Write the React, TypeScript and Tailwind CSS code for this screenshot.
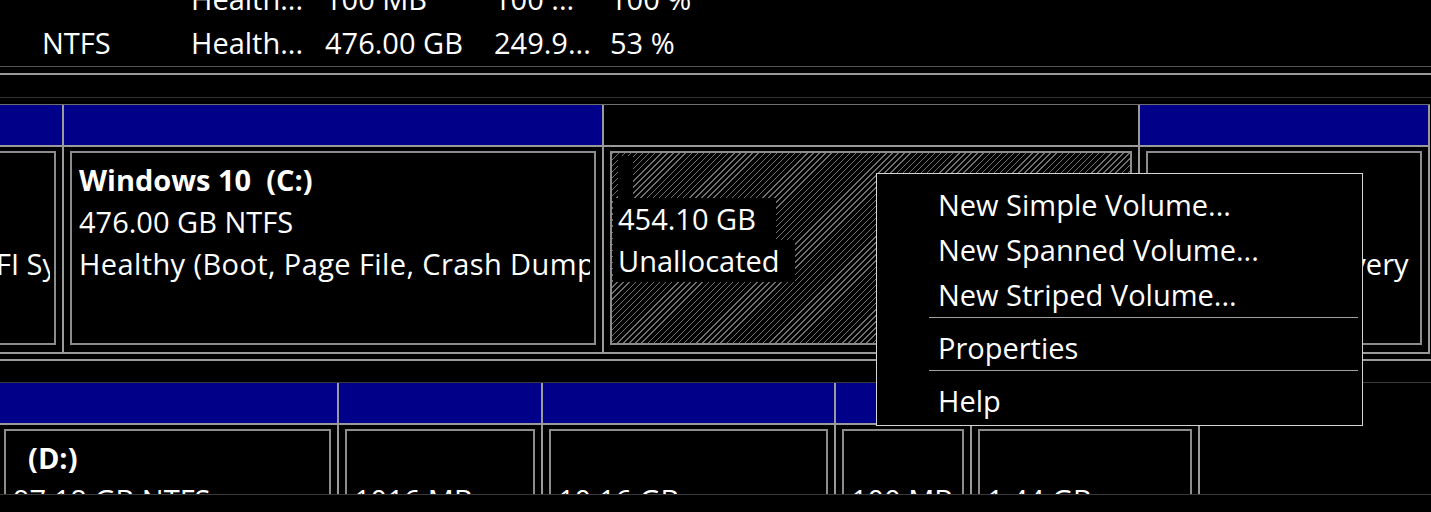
import type { ReactNode } from "react";

type Line = { text: string; bold?: boolean; className?: string };

const BAR_BLUE = "bg-[#000088]";

const listRows: string[][] = [
  ["", "Health...", "100 MB", "100 ...", "100 %"],
  ["NTFS", "Health...", "476.00 GB", "249.9...", "53 %"],
];

const colWidths = ["w-[191px] pl-[42px]", "w-[134px]", "w-[169px]", "w-[116px]", "flex-1"];

function VolumeList() {
  return (
    <div className="h-[66px] overflow-hidden">
      <div className="-mt-[23px]">
        {listRows.map((row, i) => (
          <div key={i} className="flex h-[44px] items-center whitespace-nowrap leading-[44px]">
            {row.map((cell, j) => (
              <div key={j} className={`${colWidths[j]} shrink-0`}>
                {cell}
              </div>
            ))}
          </div>
        ))}
      </div>
    </div>
  );
}

type PartitionProps = {
  width: string;
  bar: "blue" | "none";
  lines?: Line[];
  children?: ReactNode;
  hatched?: boolean;
  textClass?: string;
};

function Partition({
  width,
  bar,
  lines = [],
  children,
  hatched = false,
  textClass = "mr-[4px] pl-[7px]",
}: PartitionProps) {
  return (
    <div className={`${width} flex shrink-0 flex-col border-r-2 border-[#9a9a9a]`}>
      <div
        className={`h-[42px] border-b-2 border-[#9a9a9a] ${bar === "blue" ? BAR_BLUE : "bg-black"}`}
      />
      <div className="h-[205px] pb-[7px] pl-[6px] pr-[6px] pt-[4px]">
        <div
          className={`h-full overflow-hidden border-2 border-[#8c8c8c] ${
            hatched
              ? "bg-[repeating-linear-gradient(135deg,#707070_0px,#707070_1px,#000_1px,#000_4.3px)]"
              : "bg-black"
          }`}
        >
          {children ?? (
            <div className={`${textClass} overflow-hidden whitespace-pre pt-[6px] leading-[42px]`}>
              {lines.map((line, i) => (
                <div key={i} className={`${line.bold ? "font-bold" : ""} ${line.className ?? ""}`}>
                  {line.text || "\u00a0"}
                </div>
              ))}
            </div>
          )}
        </div>
      </div>
    </div>
  );
}

function Unallocated() {
  return (
    <div className="pt-[3px] leading-[42px] whitespace-nowrap">
      <div className="ml-[6px] h-[42px] w-[15px] bg-black" />
      <div className="ml-[1px] w-fit bg-black pl-[5px] pr-[20px]">454.10 GB</div>
      <div className="ml-[1px] w-fit bg-black pl-[5px] pr-[15px]">Unallocated</div>
    </div>
  );
}

function ContextMenu() {
  const items = ["New Simple Volume...", "New Spanned Volume...", "New Striped Volume..."];
  return (
    <div className="absolute left-[876px] top-[173px] h-[253px] w-[487px] border border-[#d4d4d4] bg-black pt-[8px] leading-[45px] whitespace-nowrap">
      {items.map((item) => (
        <div key={item} className="h-[45px] pl-[61px]">
          {item}
        </div>
      ))}
      <div className="ml-[52px] mr-[4px] h-px bg-[#a0a0a0]" />
      <div className="mt-[8px] h-[44px] pl-[61px] leading-[44px]">Properties</div>
      <div className="ml-[52px] mr-[4px] h-px bg-[#a0a0a0]" />
      <div className="mt-[7px] h-[45px] pl-[61px]">Help</div>
    </div>
  );
}

export default function App() {
  return (
    <div className="relative h-[512px] w-[1431px] overflow-hidden bg-black font-['Open_Sans',sans-serif] text-[29px] text-white">
      <VolumeList />
      <div className="h-px bg-[#555555]" />
      <div className="mt-[6px] h-[2px] bg-[#9a9a9a]" />

      <div className="h-[420px] overflow-hidden border-b border-[#3a3a3a]">
        <div className="h-[22px]" />
        <div className="h-px bg-[#333333]" />
        <div className="h-[6px]" />

        {/* Disk 0 */}
        <div className="-ml-[155px] flex w-fit border-b-2 border-t border-[#9a9a9a] border-t-[#6e6e6e]">
          <Partition
            width="w-[219px]"
            bar="blue"
            lines={[{ text: "" }, { text: "100 MB" }, { text: "Healthy (EFI System Partition)" }]}
          />
          <Partition
            width="w-[540px]"
            bar="blue"
            lines={[
              { text: "Windows 10  (C:)", bold: true },
              { text: "476.00 GB NTFS" },
              {
                text: "Healthy (Boot, Page File, Crash Dump, Basic Data Partition)",
                className: "tracking-[0.4px]",
              },
            ]}
          />
          <Partition width="w-[536px]" bar="none" hatched>
            <Unallocated />
          </Partition>
          <Partition
            width="w-[290px]"
            bar="blue"
            textClass="mr-[10px] pl-[18px]"
            lines={[{ text: "" }, { text: "1.00 GB" }, { text: "Healthy (Recovery Partition)" }]}
          />
        </div>

        <div className="h-[5px]" />
        <div className="h-[2px] bg-[#9a9a9a]" />
        <div className="h-[21px]" />
        <div className="h-px bg-[#3a3a3a]" />

        {/* Disk 1 */}
        <div className="-ml-[2px] flex w-fit">
          <Partition
            width="w-[341px]"
            bar="blue"
            lines={[{ text: "  (D:)", bold: true }, { text: "97.18 GB NTFS" }]}
          />
          <Partition width="w-[204px]" bar="blue" lines={[{ text: "" }, { text: "1016 MB" }]} />
          <Partition width="w-[293px]" bar="blue" lines={[{ text: "" }, { text: "10.16 GB" }]} />
          <Partition width="w-[136px]" bar="blue" lines={[{ text: "" }, { text: "100 MB" }]} />
          <Partition width="w-[228px]" bar="blue" lines={[{ text: "" }, { text: "1.44 GB" }]} />
        </div>
      </div>

      <ContextMenu />
    </div>
  );
}
